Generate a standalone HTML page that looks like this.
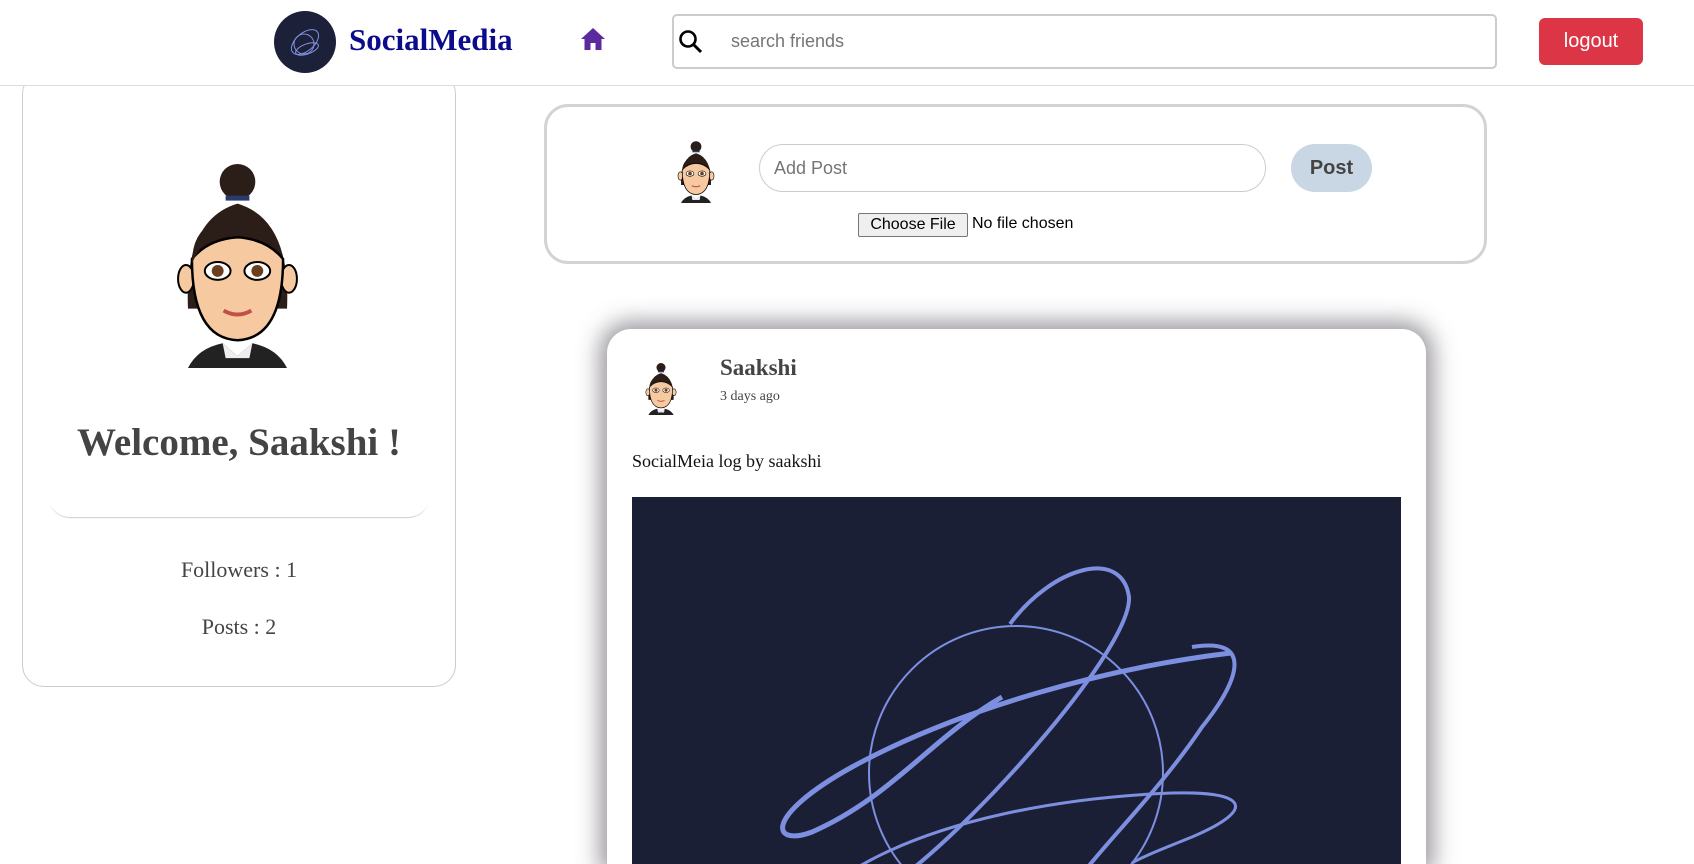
<!DOCTYPE html>
<html><head><meta charset="utf-8"><style>
*{box-sizing:border-box;margin:0;padding:0}
html,body{width:1694px;height:864px;overflow:hidden}
body{background:#fff;font-family:"Liberation Serif",serif;position:relative}
.abs{position:absolute}
</style></head><body>
<svg width="0" height="0" style="position:absolute"><defs>
<symbol id="av" viewBox="0 0 120 210">
<circle cx="60" cy="22" r="18" fill="#2b1d17"/>
<rect x="48" y="36" width="24" height="5" fill="#2a3a6a"/>
<path d="M10 150 Q6 60 60 44 Q114 60 110 150 Z" fill="#2b1d17"/>
<ellipse cx="8" cy="120" rx="8" ry="14" fill="#f7c9a0" stroke="#000" stroke-width="2"/>
<ellipse cx="112" cy="120" rx="8" ry="14" fill="#f7c9a0" stroke="#000" stroke-width="2"/>
<path d="M14 100 Q14 180 60 182 Q106 180 106 100 Q90 80 60 78 Q30 80 14 100Z" fill="#f7c9a0" stroke="#000" stroke-width="2.5"/>
<path d="M14 105 Q30 60 100 80 Q80 60 40 62 Q14 70 14 105Z" fill="#2b1d17"/>
<ellipse cx="40" cy="112" rx="13" ry="9" fill="#fff" stroke="#000" stroke-width="2"/>
<ellipse cx="80" cy="112" rx="13" ry="9" fill="#fff" stroke="#000" stroke-width="2"/>
<circle cx="40" cy="112" r="6" fill="#6b3e1e"/><circle cx="80" cy="112" r="6" fill="#6b3e1e"/>
<path d="M46 152 Q60 160 74 152" stroke="#c0504a" stroke-width="4" fill="none"/>
<path d="M10 210 Q20 190 45 185 L60 198 L75 185 Q100 190 110 210Z" fill="#222"/>
<path d="M45 185 L60 198 L75 185 L72 200 L48 200Z" fill="#eee"/>
</symbol></defs></svg>

<div class="abs" style="left:22px;top:72px;width:434px;height:615px;border:1px solid #ccc;border-radius:22px"></div>
<div class="abs" style="left:48px;top:80px;width:382px;height:437px;border-radius:0 0 22px 22px;box-shadow:0 2px 1px -1px rgba(0,0,0,.2)"></div>
<div class="abs" style="left:0;top:0;width:1694px;height:86px;background:#fff;border-bottom:1px solid #ddd"></div>
<div class="abs" style="left:274px;top:11px;width:62px;height:62px;border-radius:50%;background:#1c2039;overflow:hidden">
<svg width="62" height="62"><g fill="none" stroke="#8193e0" stroke-width="1"><ellipse cx="31" cy="31" rx="16" ry="9" transform="rotate(-40 31 31)"/><circle cx="30" cy="33" r="10"/><ellipse cx="33" cy="38" rx="12" ry="5" transform="rotate(-20 33 38)"/></g></svg></div>
<div class="abs" style="left:349px;top:22px;font-size:31px;font-weight:bold;color:#0b0b8c">SocialMedia</div>
<svg class="abs" style="left:581px;top:28px" width="24" height="22" viewBox="0 0 24 22"><path d="M12 0 L24 11 L20.5 11 L20.5 22 L14.5 22 L14.5 15 L9.5 15 L9.5 22 L3.5 22 L3.5 11 L0 11Z" fill="#5b2a9e"/></svg>
<div class="abs" style="left:672px;top:14px;width:825px;height:55px;border:2px solid #ccc;border-radius:5px"></div>
<svg class="abs" style="left:678px;top:29px" width="26" height="26"><circle cx="10" cy="10" r="7.5" fill="none" stroke="#000" stroke-width="2.6"/><line x1="15.5" y1="15.5" x2="23" y2="23" stroke="#000" stroke-width="3"/></svg>
<div class="abs" style="left:731px;top:31px;font-family:'Liberation Sans',sans-serif;font-size:18px;color:#757575">search friends</div>
<div class="abs" style="left:1539px;top:18px;width:104px;height:47px;background:#dc3545;border-radius:6px;color:#fff;font-family:'Liberation Sans',sans-serif;font-size:20px;text-align:center;line-height:47px">logout</div>

<svg class="abs" style="left:175px;top:160px" width="125" height="208"><use href="#av"/></svg>
<div class="abs" style="left:22px;top:420px;width:434px;text-align:center;font-size:39px;font-weight:bold;color:#444">Welcome, Saakshi !</div>
<div class="abs" style="left:22px;top:557px;width:434px;text-align:center;font-size:22px;color:#444">Followers : 1</div>
<div class="abs" style="left:22px;top:614px;width:434px;text-align:center;font-size:22px;color:#444">Posts : 2</div>

<div class="abs" style="left:544px;top:104px;width:943px;height:160px;border:3px solid #d3d3d3;border-radius:24px"></div>
<svg class="abs" style="left:674px;top:140px" width="44" height="63"><use href="#av"/></svg>
<div class="abs" style="left:759px;top:144px;width:507px;height:48px;border:1px solid #ccc;border-radius:24px;font-family:'Liberation Sans',sans-serif;font-size:18px;color:#757575;line-height:46px;padding-left:14px">Add Post</div>
<div class="abs" style="left:1291px;top:144px;width:81px;height:48px;background:#c9d6e4;border-radius:24px;font-family:'Liberation Sans',sans-serif;font-size:20px;font-weight:bold;color:#444;text-align:center;line-height:48px">Post</div>
<div class="abs" style="left:858px;top:213px;width:110px;height:24px;background:#efefef;border:1px solid #767676;border-radius:2px;font-family:'Liberation Sans',sans-serif;font-size:16px;text-align:center;line-height:22px">Choose File</div>
<div class="abs" style="left:972px;top:215px;font-family:'Liberation Sans',sans-serif;font-size:16px">No file chosen</div>

<div class="abs" style="left:607px;top:329px;width:819px;height:535px;border-radius:24px 24px 0 0;background:#fff;box-shadow:0 0 22px 8px rgba(80,75,85,.55);clip-path:inset(-60px -60px 0 -60px)"></div>
<svg class="abs" style="left:643px;top:362px" width="36" height="53"><use href="#av"/></svg>
<div class="abs" style="left:720px;top:355px;font-size:23px;font-weight:bold;color:#444">Saakshi</div>
<div class="abs" style="left:720px;top:389px;font-size:14px;color:#444">3 days ago</div>
<div class="abs" style="left:632px;top:451px;font-size:18px;color:#111">SocialMeia log by saakshi</div>
<div class="abs" style="left:632px;top:497px;width:769px;height:367px;background:#1b1f35;overflow:hidden">
<svg width="769" height="367"><g fill="none" stroke="#7d8fe0">
<circle cx="384" cy="276" r="147" stroke-width="2"/>
<path d="M378 127 C420 70 490 50 497 100 C500 150 350 320 270 380" stroke-width="4"/>
<path d="M560 150 C620 140 610 180 570 230 C530 290 470 350 448 380" stroke-width="4"/>
<path d="M599 156 C480 170 330 210 220 270 C130 320 140 350 180 335 C260 300 300 240 370 200" stroke-width="5"/>
<path d="M210 380 C300 320 440 300 540 296 C610 294 630 310 560 340 C530 352 510 360 500 366" stroke-width="3"/>
</g></svg></div>
</body></html>
